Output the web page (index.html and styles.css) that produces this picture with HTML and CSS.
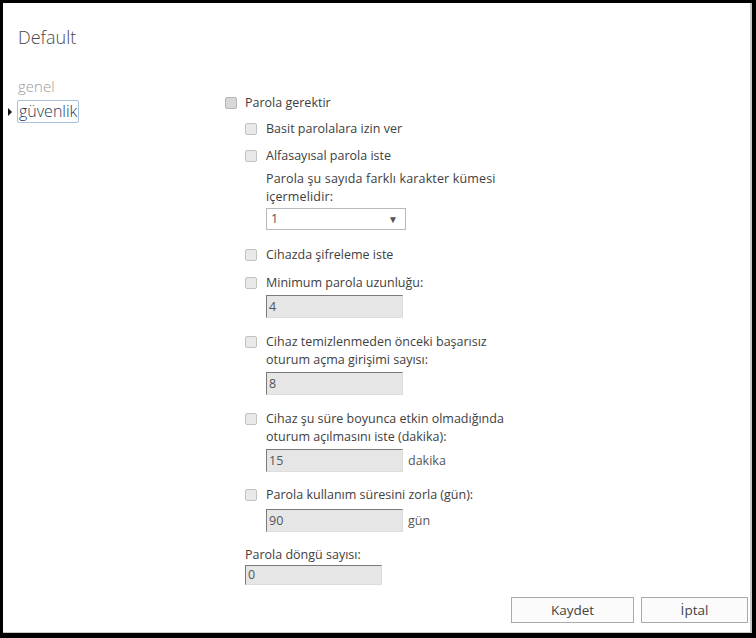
FILE: index.html
```html
<!DOCTYPE html>
<html lang="tr">
<head>
<meta charset="utf-8">
<title>Default</title>
<link rel="stylesheet" href="styles.css">
</head>
<body>
<div class="frame">
  <div class="title">Default</div>
  <div class="main">
    <nav class="nav">
      <div class="nav-item">genel</div>
      <div class="nav-item current"><span class="caret"></span><span class="nav-box">güvenlik</span></div>
    </nav>
    <form class="form">
      <label class="opt top"><span class="cb"></span><span class="txt">Parola gerektir</span></label>
      <div class="group">
        <label class="opt g1"><span class="cb"></span><span class="txt">Basit parolalara izin ver</span></label>
        <div class="opt g2"><span class="cb"></span>
          <div class="txt">
            Alfasayısal parola iste
            <div class="note">Parola şu sayıda farklı karakter kümesi<br>içermelidir:</div>
            <div class="select"><span>1</span><span class="arrow">▼</span></div>
          </div>
        </div>
        <label class="opt g3"><span class="cb"></span><span class="txt">Cihazda şifreleme iste</span></label>
        <div class="opt g4"><span class="cb"></span>
          <div class="txt">
            Minimum parola uzunluğu:
            <div class="field f-near"><span class="box">4</span></div>
          </div>
        </div>
        <div class="opt g5"><span class="cb"></span>
          <div class="txt">
            Cihaz temizlenmeden önceki başarısız<br>oturum açma girişimi sayısı:
            <div class="field f-near"><span class="box">8</span></div>
          </div>
        </div>
        <div class="opt g5"><span class="cb"></span>
          <div class="txt">
            Cihaz şu süre boyunca etkin olmadığında<br>oturum açılmasını iste (dakika):
            <div class="field f-near"><span class="box">15</span><span class="unit">dakika</span></div>
          </div>
        </div>
        <div class="opt g6"><span class="cb"></span>
          <div class="txt">
            Parola kullanım süresini zorla (gün):
            <div class="field f-far"><span class="box">90</span><span class="unit">gün</span></div>
          </div>
        </div>
        <div class="plain">
          Parola döngü sayısı:
          <div class="field f-tight"><span class="box short">0</span></div>
        </div>
      </div>
    </form>
  </div>
  <div class="actions">
    <button type="button" class="btn save">Kaydet</button>
    <button type="button" class="btn cancel">İptal</button>
  </div>
</div>
</body>
</html>
```

FILE: styles.css
```css
* { box-sizing: border-box; }

html, body {
  margin: 0;
  padding: 0;
  background: #000;
}

.frame {
  width: 756px;
  height: 638px;
  background: #fff;
  border-style: solid;
  border-color: #000;
  border-width: 3px 4px 5px 3px;
  box-shadow: inset -2px -1px 0 #c8c8c8;
  display: flex;
  flex-direction: column;
  font-family: "Segoe UI", "Open Sans", "Noto Sans", sans-serif;
  color: #404040;
}

.title {
  padding: 22px 0 0 15px;
  font-size: 18px;
  line-height: 24px;
  color: #4a4a4a;
  font-weight: 300;
}

.main {
  display: flex;
  flex: 1;
}

/* left navigation */
.nav {
  width: 222px;
  padding: 27px 0 0 5px;
}

.nav-item {
  font-size: 15px;
  line-height: 20px;
  padding-left: 10px;
  color: #9a9a9a;
  font-weight: 300;
}

.nav-item.current {
  position: relative;
  margin-top: 4px;
  padding-left: 9px;
  font-size: 16px;
  color: #233a58;
}

.caret {
  position: absolute;
  left: 0;
  top: 8px;
  width: 0;
  height: 0;
  border-style: solid;
  border-width: 4px 0 4px 4px;
  border-color: transparent transparent transparent #111;
}

.nav-box {
  display: inline-block;
  height: 23px;
  line-height: 20px;
  padding: 0 1px;
  border: 1px solid #a9c2de;
  border-radius: 2px;
}

/* form column */
.form {
  padding-top: 45px;
  font-size: 12.5px;
  line-height: 18px;
}

.opt {
  display: flex;
  align-items: flex-start;
}

.cb {
  flex: none;
  width: 12px;
  height: 12px;
  margin-top: 3px;
  margin-right: 8px;
  border: 1px solid #c2c2c2;
  border-radius: 2px;
  background: #e9e9e9;
}

.opt.top .cb {
  background: #d8d8d8;
  border-color: #b4b4b4;
}

.group {
  padding-left: 20px;
}

.group .cb { margin-right: 9px; }

.g1 { margin-top: 8px; }
.g2 { margin-top: 9px; }
.g3 { margin-top: 16px; }
.g4 { margin-top: 10px; }
.g5 { margin-top: 15px; }
.g6 { margin-top: 14px; }

.plain { margin-top: 14px; }

.note {
  margin-top: 5px;
  letter-spacing: 0.15px;
}

.select {
  width: 140px;
  height: 22px;
  margin-top: 2px;
  padding: 0 7px 0 4px;
  border: 1px solid #b9b9b9;
  display: flex;
  justify-content: space-between;
  align-items: center;
  color: #555;
}

.select .arrow {
  font-size: 10px;
  color: #555;
}

.field {
  display: flex;
  align-items: center;
}

.f-near { margin-top: 3px; }
.f-far { margin-top: 5px; }
.f-tight { margin-top: 1px; }

.box {
  width: 137px;
  height: 23px;
  padding-left: 2px;
  line-height: 21px;
  background: #e6e6e6;
  border-style: solid;
  border-width: 1px;
  border-color: #7a7a7a #dcdcdc #dcdcdc #7a7a7a;
  color: #555;
}

.box.short { height: 20px; line-height: 18px; }

.unit {
  margin-left: 5px;
  color: #555;
}

/* footer buttons */
.actions {
  display: flex;
  justify-content: flex-end;
  gap: 7px;
  padding: 0 4px 10px 0;
}

.btn {
  height: 26px;
  border: 1px solid #ababab;
  background: #fbfbfb;
  font-family: inherit;
  font-size: 13.5px;
  color: #444;
  padding: 0;
}

.btn.save { width: 123px; }
.btn.cancel { width: 107px; }
```
